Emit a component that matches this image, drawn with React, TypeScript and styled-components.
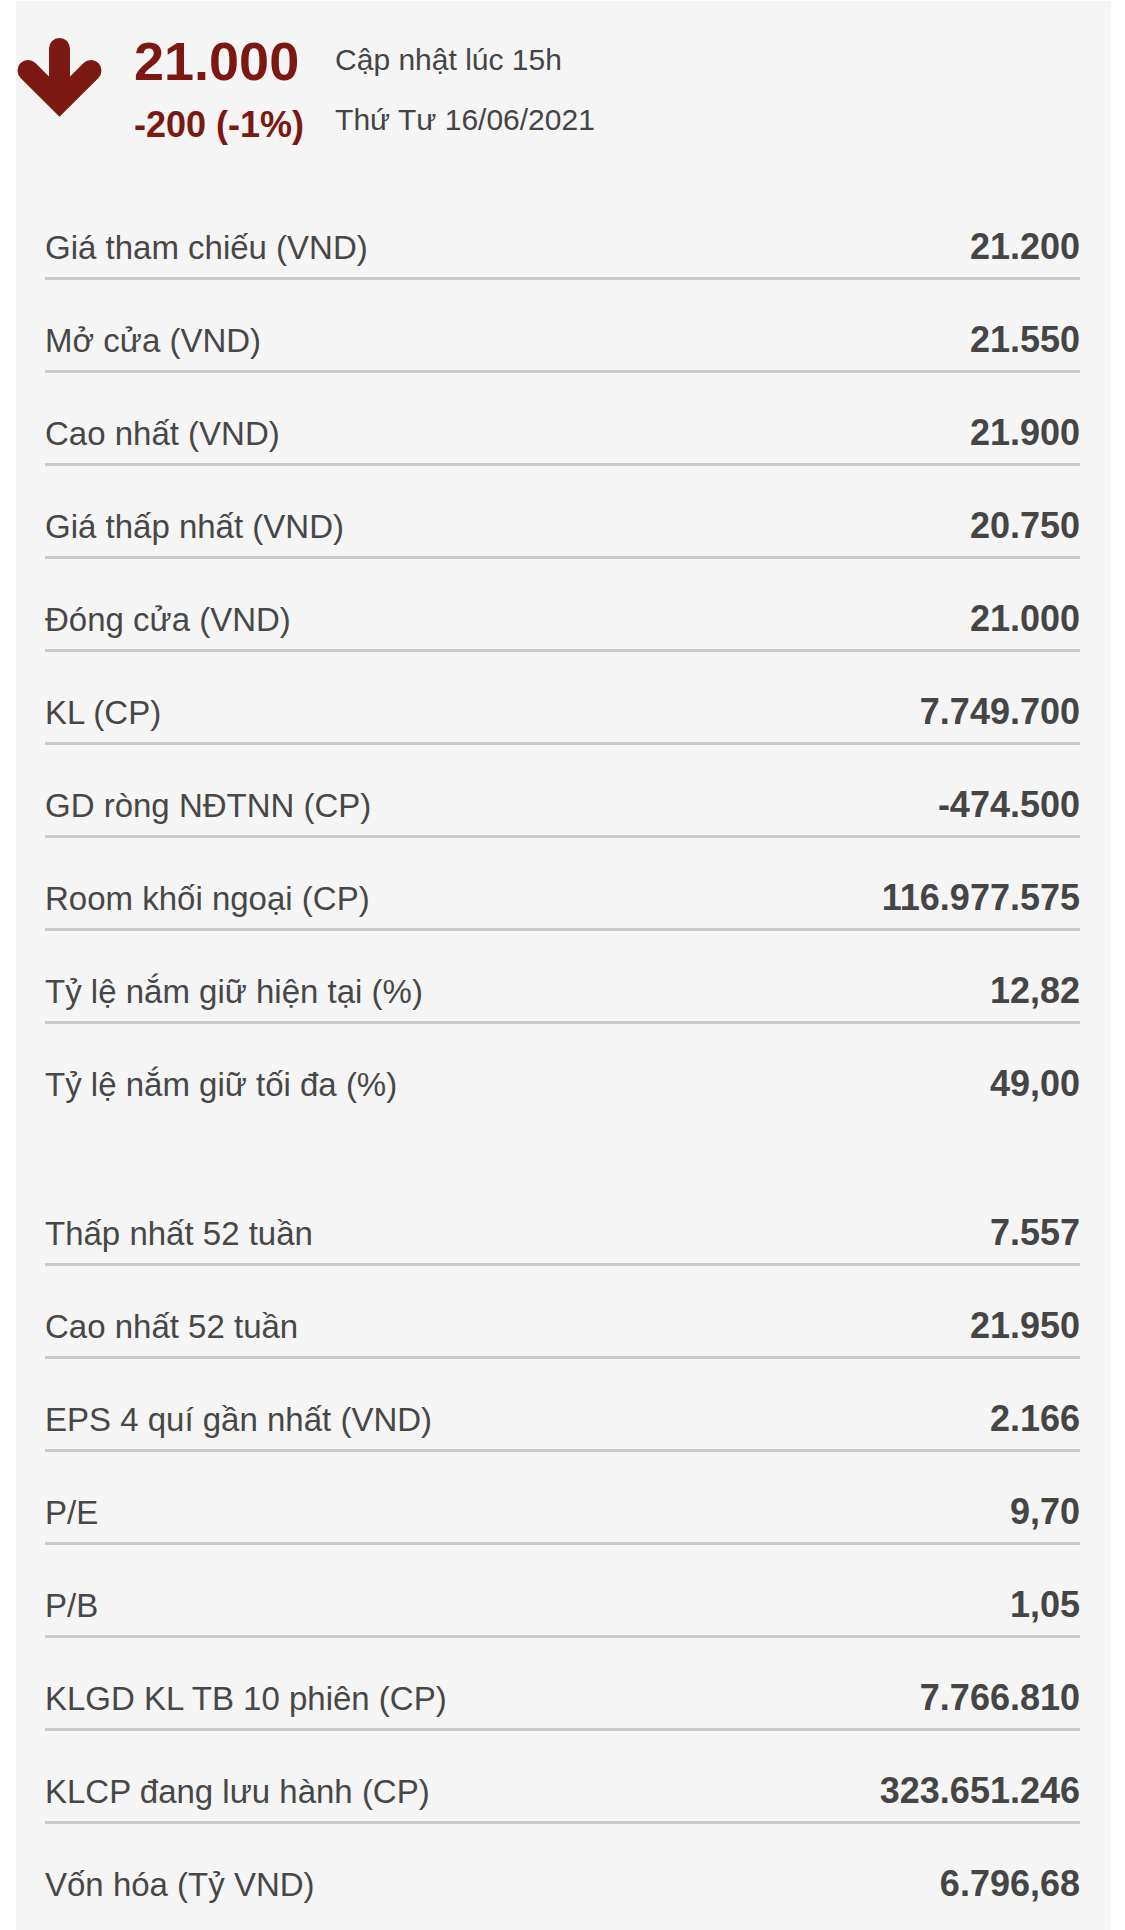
import styled, { createGlobalStyle } from "styled-components";

const GlobalStyle = createGlobalStyle`
  body {
    margin: 0;
    background: #ffffff;
    font-family: "Liberation Sans", Arial, sans-serif;
  }
`;

const GROUPS = [
  [
    { label: "Giá tham chiếu (VND)", value: "21.200" },
    { label: "Mở cửa (VND)", value: "21.550" },
    { label: "Cao nhất (VND)", value: "21.900" },
    { label: "Giá thấp nhất (VND)", value: "20.750" },
    { label: "Đóng cửa (VND)", value: "21.000" },
    { label: "KL (CP)", value: "7.749.700" },
    { label: "GD ròng NĐTNN (CP)", value: "-474.500" },
    { label: "Room khối ngoại (CP)", value: "116.977.575" },
    { label: "Tỷ lệ nắm giữ hiện tại (%)", value: "12,82" },
    { label: "Tỷ lệ nắm giữ tối đa (%)", value: "49,00" },
  ],
  [
    { label: "Thấp nhất 52 tuần", value: "7.557" },
    { label: "Cao nhất 52 tuần", value: "21.950" },
    { label: "EPS 4 quí gần nhất (VND)", value: "2.166" },
    { label: "P/E", value: "9,70" },
    { label: "P/B", value: "1,05" },
    { label: "KLGD KL TB 10 phiên (CP)", value: "7.766.810" },
    { label: "KLCP đang lưu hành (CP)", value: "323.651.246" },
    { label: "Vốn hóa (Tỷ VND)", value: "6.796,68" },
  ],
];

function DownArrow() {
  return (
    <SCArrow width="86" height="82" viewBox="0 0 86 82">
      <g
        fill="none"
        stroke="#7b1811"
        strokeWidth="21"
        strokeLinecap="round"
        strokeLinejoin="miter"
      >
        <path d="M43.5 12.5 V62" />
        <path d="M12 34.5 L43.5 66 L75 34.5" />
      </g>
    </SCArrow>
  );
}

export default function App() {
  return (
    <>
      <GlobalStyle />
      <SCPage>
        <SCPanel>
          <SCHeader>
            <DownArrow />
            <SCPrice>
              <strong>21.000</strong>
              <span>-200 (-1%)</span>
            </SCPrice>
            <SCInfo>
              <span>Cập nhật lúc 15h</span>
              <span>Thứ Tư 16/06/2021</span>
            </SCInfo>
          </SCHeader>

          {GROUPS.map((group, i) => (
            <SCGroup key={i}>
              {group.map((row) => (
                <SCRow key={row.label}>
                  <SCLabel>{row.label}</SCLabel>
                  <SCValue>{row.value}</SCValue>
                </SCRow>
              ))}
            </SCGroup>
          ))}
        </SCPanel>
      </SCPage>
    </>
  );
}

const SCPage = styled.div`
  padding: 1px 14px 0 16px;
`;

const SCPanel = styled.div`
  width: 1095px;
  background: #f5f5f5;
  padding-bottom: 24px;
`;

const SCHeader = styled.div`
  display: flex;
  align-items: flex-start;
  padding: 29px 0 37px 0;
  height: 120px;
  box-sizing: content-box;
`;

const SCArrow = styled.svg`
  display: block;
  margin-top: 6px;
  flex-shrink: 0;
`;

const SCPrice = styled.div`
  display: flex;
  flex-direction: column;
  margin-left: 32px;
  color: #7b1811;
  font-weight: 700;

  strong {
    font-size: 54px;
    line-height: 60px;
    margin-top: 1px;
  }

  span {
    font-size: 36px;
    line-height: 44px;
    margin-top: 12px;
  }
`;

const SCInfo = styled.div`
  display: flex;
  flex-direction: column;
  margin-left: 31px;
  color: #444444;
  font-size: 30px;
  line-height: 60px;
`;

const SCGroup = styled.div`
  padding: 0 31px 0 29px;

  & + & {
    margin-top: 56px;
  }
`;

const SCRow = styled.div`
  display: flex;
  align-items: baseline;
  justify-content: space-between;
  height: 93px;
  box-sizing: border-box;
  padding-top: 38px;
  border-bottom: 3px solid #cbcbcb;

  &:last-child {
    border-bottom: none;
  }
`;

const SCLabel = styled.span`
  color: #474747;
  font-size: 33px;
  line-height: 44px;
`;

const SCValue = styled.span`
  color: #454545;
  font-size: 36px;
  font-weight: 700;
  line-height: 44px;
`;
